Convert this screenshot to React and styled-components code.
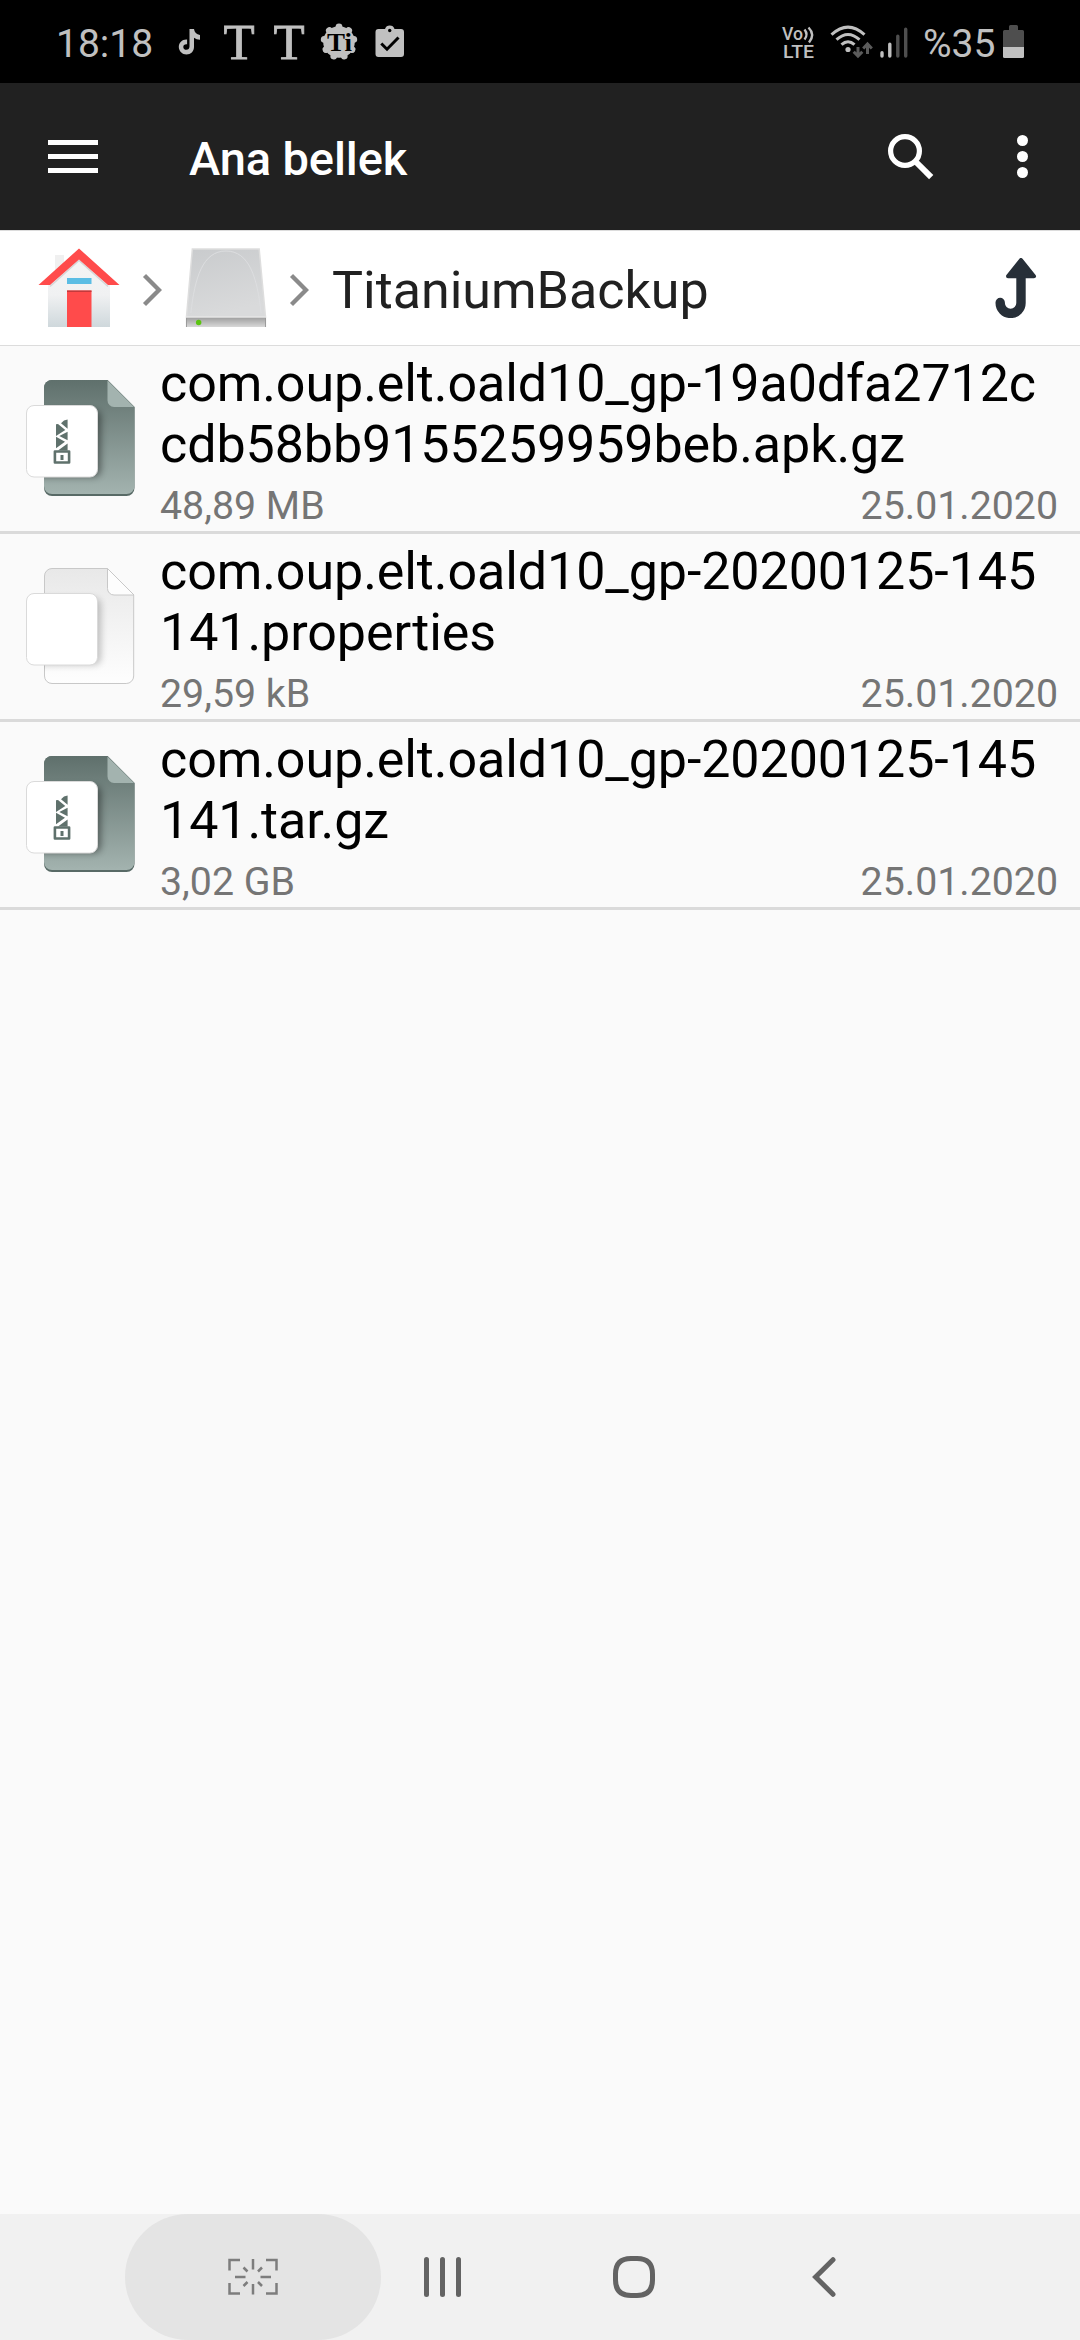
import React from 'react'
import styled, { createGlobalStyle } from 'styled-components';

const files = [
    { name: ['com.oup.elt.oald10_gp-19a0dfa2712c', 'cdb58bb9155259959beb.apk.gz'], size: '48,89 MB', date: '25.01.2020', archive: true },
    { name: ['com.oup.elt.oald10_gp-20200125-145', '141.properties'], size: '29,59 kB', date: '25.01.2020', archive: false },
    { name: ['com.oup.elt.oald10_gp-20200125-145', '141.tar.gz'], size: '3,02 GB', date: '25.01.2020', archive: true },
]

function TikTokIcon() {
    return (
        <svg width="24" height="34" viewBox="0 0 24 34">
            <path d="M11.500 4H16c.4 3.400 2.400 5.600 6 6v4.700c-2.400 0-4.300-.7-6-1.900v9.200c0 4.400-3.300 7.500-7.500 7.500S.8 26 .8 22c0-4.500 3.700-7.900 8.300-7.400v4.700c-2.100-.5-3.800.7-3.800 2.600 0 1.700 1.300 2.900 3 2.900 2 0 3.200-1.300 3.200-3.300z" fill="#c0c0c0" />
        </svg>
    )
}

function TitaniumIcon() {
    const teeth = [0, 40, 80, 120, 160, 200, 240, 280, 320]
    return (
        <svg width="38" height="38" viewBox="-19 -19 38 38">
            <circle r="15.800" fill="#c0c0c0" />
            {teeth.map((a) => (
                <circle key={a} cy="-15" r="3.400" fill="#c0c0c0" transform={`rotate(${a})`} />
            ))}
            <text x="-12" y="8.500" fontFamily="Liberation Serif, serif" fontWeight="700" fontSize="25" textLength="25" lengthAdjust="spacingAndGlyphs">Ti</text>
        </svg>
    )
}

function TaskIcon() {
    return (
        <svg width="30" height="33" viewBox="0 0 30 33">
            <path d="M3.500 4H10a5 5 0 0 1 9.500 0H26a3 3 0 0 1 3 3v22a3 3 0 0 1-3 3H3.500a3 3 0 0 1-3-3V7a3 3 0 0 1 3-3z" fill="#c0c0c0" />
            <circle cx="14.700" cy="5.500" r="1.700" fill="#000" />
            <path d="M6.300 18.500l5.700 5.700L23.500 12.500" fill="none" stroke="#000" strokeWidth="3" />
        </svg>
    )
}

function VolteIcon() {
    return (
        <svg width="34" height="44" viewBox="0 -5 34 44" overflow="visible" fill="#c0c0c0" fontFamily="Roboto, sans-serif" fontWeight="500">
            <text x="0" y="15" fontSize="18.500" textLength="21" lengthAdjust="spacingAndGlyphs">Vo</text>
            <text x="1" y="33" fontSize="18.500" textLength="31" lengthAdjust="spacingAndGlyphs">LTE</text>
            <path d="M22.500 4.500q4 5 0 10M26.500 2.500q7 7 .5 15" fill="none" stroke="#c0c0c0" strokeWidth="2.400" />
        </svg>
    )
}

function WifiIcon() {
    return (
        <svg width="44" height="34" viewBox="0 0 44 34">
            <g fill="none" stroke="#c0c0c0" strokeWidth="3">
                <path d="M1.500 9.700Q18 -5.500 34.500 9.700" />
                <path d="M6.500 14.700Q18 4.300 29.500 14.700" />
                <path d="M11.500 19.700Q18 13.700 24.500 19.700" />
            </g>
            <circle cx="18" cy="24.500" r="2.600" fill="#c0c0c0" />
            <path d="M28 22v9M23.700 26.700l4.300 4.500 4.300-4.500M37.500 29v-9M33.200 23.500l4.300-4.500 4.300 4.500" fill="none" stroke="#5b5b5b" strokeWidth="3" />
        </svg>
    )
}

function SignalIcon() {
    return (
        <svg width="28" height="34" viewBox="0 0 28 34" strokeWidth="3.400" strokeLinecap="round">
            <path d="M2 27.700v3.300M9.800 19.200V31" stroke="#c0c0c0" />
            <path d="M17.800 11.200V31M25.700 4.200V31" stroke="#4e4e4e" />
        </svg>
    )
}

function BatteryIcon() {
    return (
        <svg width="21" height="33" viewBox="0 0 21 33">
            <path d="M6 1.500A1.500 1.500 0 0 1 7.500 0h6A1.500 1.500 0 0 1 15 1.500V5h4.500A1.500 1.500 0 0 1 21 6.500V22H0V6.500A1.500 1.500 0 0 1 1.500 5H6z" fill="#4e4e4e" />
            <path d="M0 22h21v9.500a1.500 1.500 0 0 1-1.500 1.500h-18A1.500 1.500 0 0 1 0 31.500z" fill="#c0c0c0" />
        </svg>
    )
}

function SearchIcon() {
    return (
        <svg width="48" height="48" viewBox="0 0 48 48" fill="none" stroke="#fff">
            <circle cx="18" cy="18" r="14.400" strokeWidth="5.200" />
            <path d="M29.500 29.500L44.200 44.200" strokeWidth="6" />
            <path d="M27.500 27.500l4 4" strokeWidth="4" />
        </svg>
    )
}

function HomeIcon() {
    return (
        <svg width="82" height="80" viewBox="0 0 82 80">
            <defs>
                <linearGradient id="wall" x1="0" y1="0" x2="0" y2="1">
                    <stop offset="0" stopColor="#f5f5f5" />
                    <stop offset=".55" stopColor="#f0f1f2" />
                    <stop offset="1" stopColor="#cfd8dc" />
                </linearGradient>
            </defs>
            <path d="M17 7h9v15h-9z" fill="#f0f0f0" />
            <path d="M10 37L41 8l31 29v42H10z" fill="url(#wall)" />
            <path d="M12 38.500L41 12.500l29 26" fill="none" stroke="#d5d7d8" strokeWidth="1.500" />
            <path d="M41 .5L81.500 37H70L41 11.500 12 37H.5z" fill="#ff4b4b" />
            <path d="M29 30h24.500v6H29z" fill="#5bbde4" />
            <path d="M29 42.500h24.500V79H29z" fill="#ff4b4b" />
            <path d="M29 42.500h24.500v1.500H29z" fill="#c23a3c" />
        </svg>
    )
}

function DriveIcon() {
    return (
        <svg width="82" height="80" viewBox="0 0 84 80" preserveAspectRatio="none">
            <defs>
                <linearGradient id="lid" x1="0" y1="0" x2=".3" y2="1">
                    <stop offset="0" stopColor="#c9cbcd" />
                    <stop offset="1" stopColor="#d9dadb" />
                </linearGradient>
                <linearGradient id="front" x1="0" y1="0" x2="0" y2="1">
                    <stop offset="0" stopColor="#9c9c9c" />
                    <stop offset="1" stopColor="#d8d8d8" />
                </linearGradient>
            </defs>
            <path d="M7.500 1h68.500L82.500 69h-81z" fill="url(#lid)" stroke="#dedede" strokeWidth="1.500" />
            <path d="M6 65C10 30 18 3 42 3s32 27 36 62" fill="none" stroke="#dcdddf" strokeWidth="1" />
            <path d="M1 69h82v10H1z" fill="url(#front)" />
            <path d="M1 69h82" stroke="#e4e4e4" strokeWidth="1.500" />
            <path d="M1.500 70v9M82.500 70v9" stroke="#999" strokeWidth="1" />
            <circle cx="14" cy="74.500" r="2.800" fill="#5bc411" />
        </svg>
    )
}

function ChevronIcon() {
    return (
        <svg width="20" height="34" viewBox="0 0 20 34">
            <path d="M2.500 2.500L17 17 2.500 31.500" fill="none" stroke="#8a8a8a" strokeWidth="4.300" />
        </svg>
    )
}

function LevelUpIcon() {
    return (
        <svg width="42" height="60" viewBox="0 0 42 60">
            <path d="M26 17v28a10.400 10.400 0 0 1-20.800 0V44.500" fill="none" stroke="#272f38" strokeWidth="9.400" strokeLinecap="round" />
            <path d="M26 2L39 18.300H13z" fill="#272f38" stroke="#272f38" strokeWidth="4" strokeLinejoin="round" />
        </svg>
    )
}

function FileIcon({ archive }) {
    const id = archive ? 'pageArchive' : 'pagePlain'
    return (
        <svg width="120" height="131" viewBox="20 27 120 131">
            <defs>
                <linearGradient id={id} x1="0" y1="0" x2="0" y2="1">
                    <stop offset="0" stopColor={archive ? '#5f706c' : '#e8e8e8'} />
                    <stop offset="1" stopColor={archive ? '#a3b3af' : '#fefefe'} />
                </linearGradient>
                <filter id={id + 'Shadow'} x="-20%" y="-20%" width="150%" height="150%">
                    <feGaussianBlur stdDeviation="3.500" />
                </filter>
                <clipPath id={id + 'Clip'}>
                    <path d="M44 42a8 8 0 0 1 8-8h55.500L134.500 61v81a8 8 0 0 1-8 8H52a8 8 0 0 1-8-8z" />
                </clipPath>
            </defs>
            {archive && <path d="M44 42a8 8 0 0 1 8-8h55.500L134.500 61v81a8 8 0 0 1-8 8H52a8 8 0 0 1-8-8z" fill="#586a66" />}
            <path
                d={archive
                    ? 'M44 42a8 8 0 0 1 8-8h55.500L134.500 61v79a8 8 0 0 1-8 8H52a8 8 0 0 1-8-8z'
                    : 'M44.500 42a7.500 7.500 0 0 1 7.500-7.500h55.500L133.700 61v81a7.500 7.500 0 0 1-7.500 7.500H52a7.500 7.500 0 0 1-7.500-7.500z'}
                fill={`url(#${id})`}
                stroke={archive ? 'none' : '#c8c8c8'}
            />
            <path
                d="M107.500 34.500v20a6.500 6.500 0 0 0 6.500 6.500h20z"
                fill={archive ? '#a3b3af' : '#fdfdfd'}
                stroke={archive ? 'none' : '#c8c8c8'}
            />
            <g clipPath={`url(#${id}Clip)`}>
                <rect x="30" y="64" width="71" height="67" rx="7" fill="#000" opacity={archive ? '.4' : '.22'} filter={`url(#${id}Shadow)`} />
            </g>
            <rect x="26.500" y="59.500" width="71" height="71.500" rx="7.500" fill="#fff" stroke="#dadada" />
            {archive && (
                <g fill="#5f716c">
                    <path d="M67.600 73.500v9.300L61 77.200l3-2.700zM56 78.300l2-.3 7.300 6L56 90zM67.600 85.800v8.400l-8.300-4.200zM56 90.800l9 5-9 6.400zM67.600 97.500v7H58z" />
                    <path d="M54.900 105.500h14.200v11H54.900z" fill="none" stroke="#5f716c" strokeWidth="2.600" strokeLinejoin="round" />
                    <path d="M60.500 109h3v5h-3z" />
                </g>
            )}
        </svg>
    )
}

function CaptureIcon() {
    return (
        <svg width="50" height="38" viewBox="0 0 50 38" fill="none" stroke="#7d7d7d" strokeWidth="2.500">
            <path d="M1.500 12.500V2H12M38 2h10.500v10.500M48.500 25v10.500H38M12 35.500H1.500V25" />
            <path d="M25 1v10.500M25 26v10.500M7 19h10.500M32.500 19H43M15.500 9.500l4 4M34 9.500l-4 4M15.500 28l4-4M34 28l-4-4" />
        </svg>
    )
}

function App() {
    return (
        <>
            <GlobalStyle />
            <Screen>
                <StatusBar>
                    <Clock>18:18</Clock>
                    <Notifications>
                        <TikTokIcon />
                        <SerifMark>T</SerifMark>
                        <SerifMark>T</SerifMark>
                        <TitaniumIcon />
                        <TaskIcon />
                    </Notifications>
                    <SystemIcons>
                        <VolteIcon />
                        <WifiIcon />
                        <SignalIcon />
                        <Percent>%35</Percent>
                        <BatteryIcon />
                    </SystemIcons>
                </StatusBar>

                <AppBar>
                    <MenuButton aria-label="Menu">
                        <span />
                        <span />
                        <span />
                    </MenuButton>
                    <Title>Ana bellek</Title>
                    <IconButton aria-label="Search">
                        <SearchIcon />
                    </IconButton>
                    <MoreButton aria-label="More">
                        <span />
                        <span />
                        <span />
                    </MoreButton>
                </AppBar>

                <Breadcrumb>
                    <HomeIcon />
                    <ChevronIcon />
                    <DriveIcon />
                    <ChevronIcon />
                    <Folder>TitaniumBackup</Folder>
                    <LevelUpIcon />
                </Breadcrumb>

                <FileList>
                    {files.map((file) => (
                        <FileRow key={file.name.join('')}>
                            <FileIcon archive={file.archive} />
                            <FileInfo>
                                <FileName>
                                    {file.name[0]}
                                    <br />
                                    {file.name[1]}
                                </FileName>
                                <FileMeta>
                                    <span>{file.size}</span>
                                    <span>{file.date}</span>
                                </FileMeta>
                            </FileInfo>
                        </FileRow>
                    ))}
                </FileList>

                <NavBar>
                    <CaptureButton aria-label="Capture">
                        <CaptureIcon />
                    </CaptureButton>
                    <RecentsButton aria-label="Recents">
                        <span />
                        <span />
                        <span />
                    </RecentsButton>
                    <HomeButton aria-label="Home">
                        <svg width="42" height="42" viewBox="0 0 42 42">
                            <path d="M18 2.500h6C34.500 2.500 39.500 7.500 39.500 18v6c0 10.500-5 15.500-15.500 15.500h-6C7.500 39.500 2.500 34.500 2.500 24v-6C2.500 7.500 7.500 2.500 18 2.500z" fill="none" stroke="#636363" strokeWidth="5" />
                        </svg>
                    </HomeButton>
                    <IconButton aria-label="Back">
                        <svg width="24" height="42" viewBox="0 0 24 42">
                            <path d="M21 3.700L3.600 21 21 38.300" fill="none" stroke="#636363" strokeWidth="5" strokeLinecap="round" />
                        </svg>
                    </IconButton>
                </NavBar>
            </Screen>
        </>
    )
}

export default App;

const GlobalStyle = createGlobalStyle`
body {
    margin:0;
    background:#fafafa;
}

svg {
    display:block;
    flex-shrink:0;
}
`

const Screen = styled.div`
width:1080px;
height:2340px;
display:flex;
flex-direction:column;
overflow:hidden;
background:#fafafa;
font-family:Roboto, sans-serif;
`

const StatusBar = styled.div`
height:83px;
box-sizing:border-box;
padding:0 56px 0 56px;
display:flex;
align-items:center;
background:#000;
color:#c0c0c0;
`

const Clock = styled.span`
width:122px;
font-size:39px;
line-height:46px;
padding-top:4px;
`

const Notifications = styled.div`
display:flex;
align-items:center;

svg:nth-child(4) {
    margin-left:15px;
}

svg:nth-child(5) {
    margin:-1px 0 0 17px;
}
`

const SerifMark = styled.span`
width:32px;
margin-left:18px;
font-family:"Liberation Serif", serif;
font-size:51px;
line-height:56px;
text-align:center;
-webkit-text-stroke:0.8px #c0c0c0;

svg + & {
    margin-left:21px;
}
`

const SystemIcons = styled.div`
display:flex;
align-items:center;
margin-left:auto;

svg:nth-child(2) {
    margin-left:14px;
}

svg:nth-child(3) {
    margin-left:6px;
}
`

const Percent = styled.span`
width:80px;
margin-left:15px;
font-size:39px;
line-height:46px;
padding-top:4px;
white-space:nowrap;
`

const AppBar = styled.header`
height:147px;
box-sizing:border-box;
padding:0 52px 0 48px;
display:flex;
align-items:center;
background:#212121;
`

const IconButton = styled.button`
padding:0;
border:none;
background:none;
display:flex;
align-items:center;
justify-content:center;
cursor:pointer;
`

const MenuButton = styled(IconButton)`
width:50px;
flex-direction:column;
gap:9px;
margin-top:-1px;

span {
    width:50px;
    height:5px;
    background:#fff;
}
`

const Title = styled.h1`
flex:1;
margin:0;
padding:5px 0 0 91px;
color:#fff;
font-size:47px;
line-height:56px;
font-weight:500;
letter-spacing:-0.1px;
`

const MoreButton = styled(IconButton)`
width:11px;
margin-left:82px;
flex-direction:column;
gap:5px;

span {
    width:11px;
    height:11px;
    border-radius:50%;
    background:#fff;
}
`

const Breadcrumb = styled.nav`
height:116px;
box-sizing:border-box;
padding:0 43px 0 38px;
display:flex;
align-items:center;
background:#fff;
border-top:1px solid #dcdcdc;
border-bottom:1px solid #dcdcdc;

svg:nth-child(2) {
    margin:3px 23px 0 22px;
}

svg:nth-child(4) {
    margin:3px 23px 0 22px;
}
`

const Folder = styled.span`
flex:1;
color:#212121;
font-size:52px;
line-height:62px;
padding-top:5px;
`

const FileList = styled.main`
flex:1;
`

const FileRow = styled.div`
height:188px;
box-sizing:border-box;
display:flex;
align-items:center;
padding:0 22px 0 20px;
border-bottom:3px solid #dadada;
`

const FileInfo = styled.div`
flex:1;
align-self:flex-start;
padding:7px 0 0 20px;
`

const FileName = styled.div`
color:#000;
font-size:52px;
line-height:61px;
letter-spacing:-0.08px;
white-space:nowrap;
`

const FileMeta = styled.div`
display:flex;
justify-content:space-between;
margin-top:8px;
color:#757575;
font-size:39.3px;
line-height:47px;
`

const NavBar = styled.footer`
height:126px;
display:flex;
align-items:center;
padding-left:125px;
background:#f1f1f1;
`

const CaptureButton = styled(IconButton)`
width:256px;
height:126px;
border-radius:63px;
background:#e4e4e4;
`

const RecentsButton = styled(IconButton)`
margin-left:43px;
gap:11px;

span {
    width:5px;
    height:40px;
    border-radius:3px;
    background:#636363;
}
`

const HomeButton = styled(IconButton)`
margin:0 157px 0 152px;
`
